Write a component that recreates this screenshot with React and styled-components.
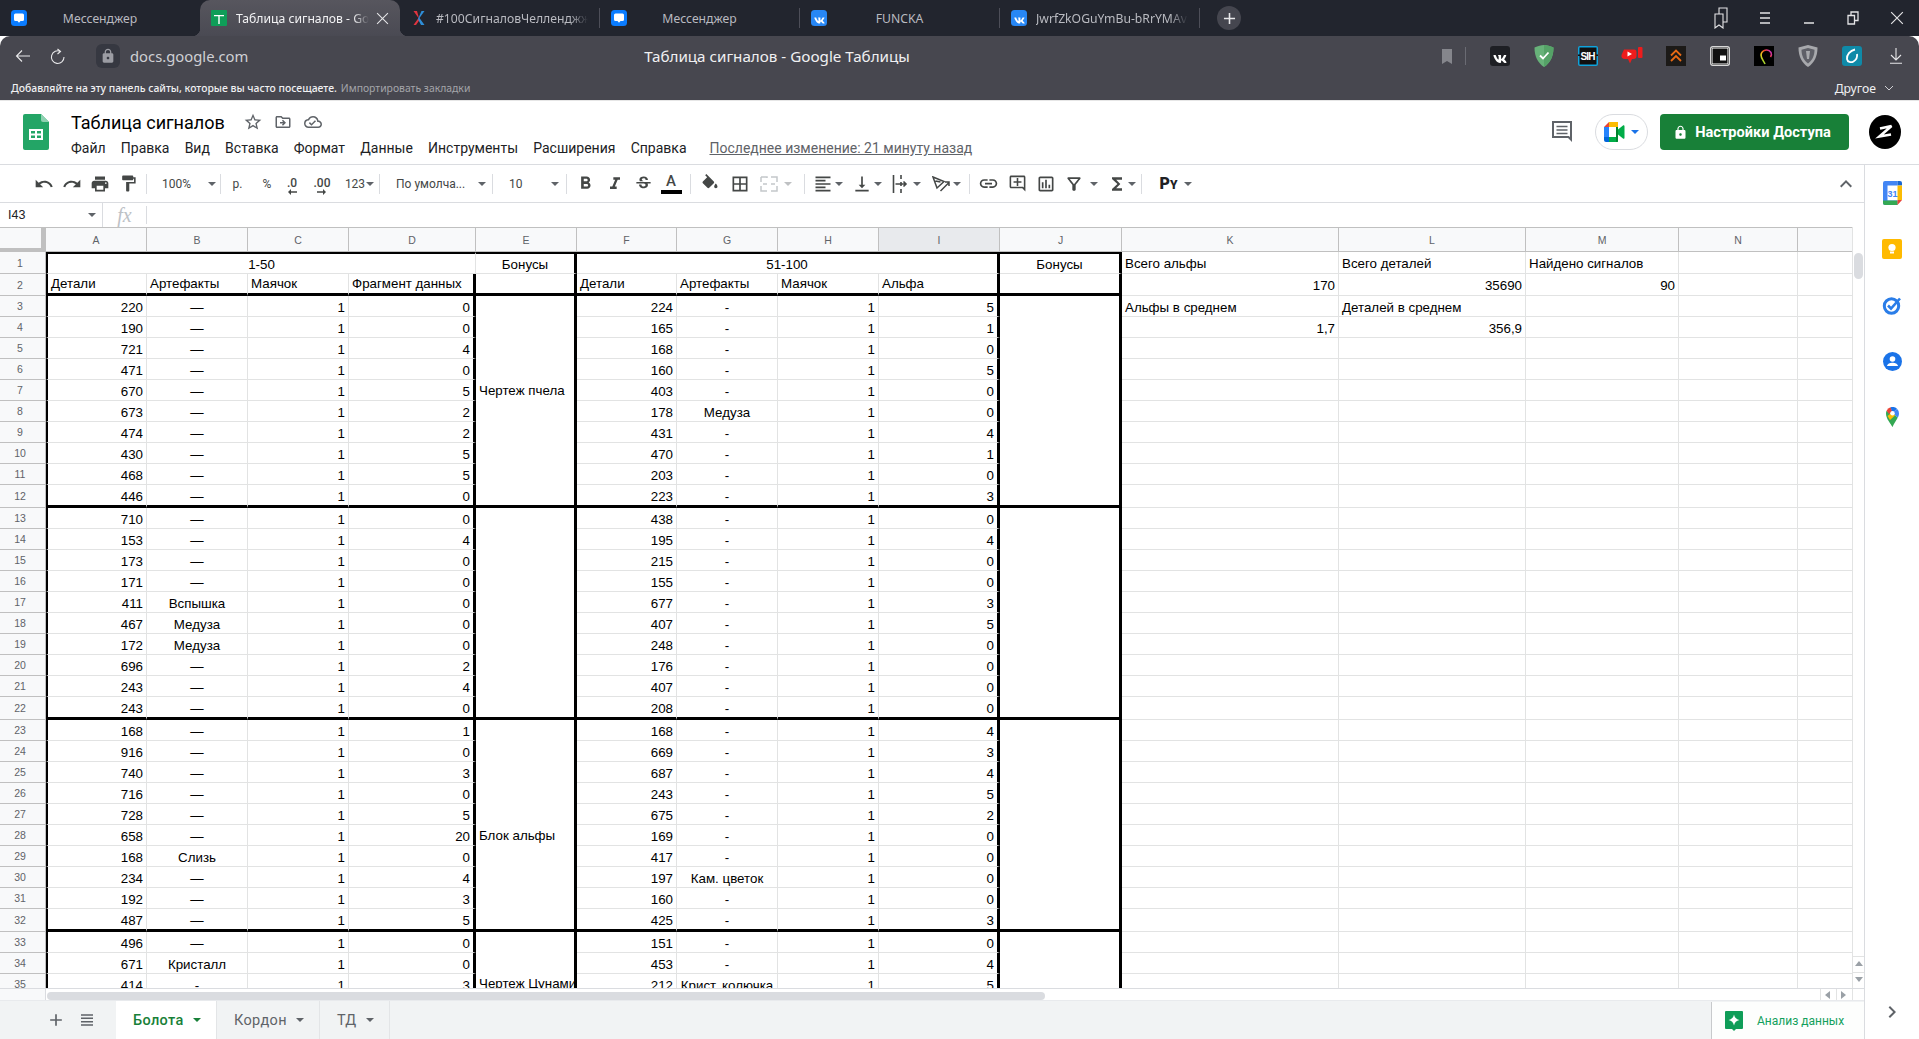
import React from "react";
import styled, { createGlobalStyle } from "styled-components";
import { FaVk } from "react-icons/fa";
import {
  MdUndo, MdRedo, MdPrint, MdFormatPaint, MdFormatBold, MdFormatItalic, MdStrikethroughS,
  MdBorderAll, MdFormatAlignLeft, MdVerticalAlignBottom, MdInsertLink,
  MdOutlineAddComment, MdOutlineInsertChart, MdOutlineFilterAlt, MdFunctions, MdStarBorder,
  MdOutlineDriveFileMove, MdOutlineCloudDone, MdLock, MdAdd, MdExpandLess, MdChevronRight,
} from "react-icons/md";

const UI_FONT = `"Noto Sans", "Open Sans", sans-serif`;
const DOC_FONT = `Roboto, "Liberation Sans", sans-serif`;
const CELL_FONT = `"Liberation Sans", Arial, sans-serif`;

const GlobalStyle = createGlobalStyle`
  html, body { margin: 0; padding: 0; background: #fff; overflow: hidden; }
  * { box-sizing: border-box; }
`;

const Page = styled.div`
  width: 1919px;
  height: 1039px;
  overflow: hidden;
  display: flex;
  flex-direction: column;
  background: #fff;
`;

/* browser chrome */
const TabStrip = styled.div`
  height: 36px;
  flex: none;
  display: flex;
  align-items: stretch;
  background: #22252e;
  font-family: ${UI_FONT};
`;

const Tab = styled.div`
  position: relative;
  width: ${p => (p.$w ? p.$w + "px" : "200px")};
  padding: 0 11px;
  display: flex;
  align-items: center;
  font-size: 12.2px;
  color: ${p => (p.$active ? "#f2f2f4" : "#b9bac0")};
  background: ${p => (p.$active ? "linear-gradient(#57565e, #4a4a53)" : "transparent")};
  border-radius: ${p => (p.$active ? "10px 10px 0 0" : "0")};
  ${p =>
    p.$active &&
    `
    &::before, &::after {
      content: "";
      position: absolute;
      bottom: 0;
      width: 8px;
      height: 8px;
    }
    &::before { left: -8px; background: radial-gradient(circle at 0 0, transparent 8px, #4a4a53 8.5px); }
    &::after { right: -8px; background: radial-gradient(circle at 100% 0, transparent 8px, #4a4a53 8.5px); }
  `}
`;

const TabTitle = styled.span`
  flex: 1;
  min-width: 0;
  overflow: hidden;
  white-space: nowrap;
  text-align: ${p => (p.$left ? "left" : "center")};
  margin: ${p => (p.$left ? "0 0 0 9px" : "0 16px 0 0")};
  mask-image: ${p => (p.$left ? "linear-gradient(90deg, #000 88%, transparent)" : "none")};
`;

const TabSep = styled.div`
  width: 1px;
  margin: 8px 0;
  background: #4d4e58;
`;

const TabClose = styled.span`
  width: 20px;
  flex: none;
  display: flex;
  justify-content: flex-end;
  color: #e6e6e8;
`;

const NewTab = styled.div`
  width: 24px;
  height: 24px;
  margin: 6px 0 0 17px;
  border-radius: 50%;
  background: #45464f;
  color: #e8e8ea;
  display: flex;
  align-items: center;
  justify-content: center;
`;

const WindowBtns = styled.div`
  margin-left: auto;
  display: flex;
`;

const WinBtn = styled.div`
  width: 44px;
  display: flex;
  align-items: center;
  justify-content: center;
  color: #e4e4e6;
`;

const AddressRow = styled.div`
  background: #47474f;
  border-radius: 10px 10px 0 0;
  height: 40px;
  flex: none;
  padding: 0 0 0 14px;
  display: flex;
  align-items: center;
  position: relative;
  z-index: 1;
  font-family: ${UI_FONT};
`;

const RoundIcon = styled.div`
  width: ${p => p.$w || 44}px;
  display: flex;
  justify-content: center;
  color: #e4e4e6;
`;

const LockBox = styled.div`
  width: 24px;
  height: 24px;
  margin-left: 12px;
  border-radius: 6px;
  background: #363841;
  display: flex;
  align-items: center;
  justify-content: center;
  color: #9b9ca3;
`;

const Url = styled.div`
  margin-left: 10px;
  width: 280px;
  font-size: 14.8px;
  color: #cfd0d4;
`;

const PageTitle = styled.div`
  width: 640px;
  margin-left: 47px;
  text-align: center;
  font-size: 15.2px;
  color: #f0f0f2;
  white-space: nowrap;
`;

const Extensions = styled.div`
  margin-left: auto;
  display: flex;
  align-items: center;
  padding-right: 1px;
`;

const ExtSep = styled.div`
  width: 1px;
  height: 18px;
  margin: 0 12px 0 13px;
  background: #6a6b73;
`;

const Ext = styled.div`
  width: 44px;
  display: flex;
  justify-content: center;
  align-items: center;
`;

const BookmarksRow = styled.div`
  height: 24px;
  flex: none;
  background: #47474f;
  padding: 0 11px;
  display: flex;
  align-items: center;
  font-family: ${UI_FONT};
  font-size: 10.4px;
  font-weight: 500;
  color: #f0f0f2;
`;

const Muted = styled.span`
  color: #a4a5aa;
  margin-left: 4px;
  font-weight: 400;
`;

const Other = styled.div`
  margin-left: auto;
  padding-right: 14px;
  display: flex;
  align-items: center;
  gap: 8px;
  font-size: 12.2px;
  font-weight: 400;
`;

/* docs header */
const DocHeader = styled.div`
  height: 65px;
  flex: none;
  border-top: 1px solid #e6e6e6;
  border-bottom: 1px solid #dadce0;
  padding: 13px 0 0 23px;
  display: flex;
  align-items: flex-start;
  font-family: ${DOC_FONT};
`;

const TitleBlock = styled.div`
  margin-left: 22px;
  margin-top: -4px;
`;

const TitleLine = styled.div`
  display: flex;
  align-items: center;
  height: 24px;
  color: #5f6368;
`;

const DocTitle = styled.div`
  width: 167px;
  font-size: 18px;
  color: #000;
`;

const TitleIcon = styled.div`
  width: 30px;
  display: flex;
  justify-content: center;
`;

const MenuBar = styled.div`
  display: flex;
  margin-top: 4px;
  font-size: 14px;
  color: #202124;
  height: 20px;
  align-items: center;
`;

const MenuItem = styled.div`
  margin-right: 15.2px;
`;

const LastEdit = styled.div`
  margin-left: 7.8px;
  color: #5f6368;
  text-decoration: underline;
`;

const HeaderRight = styled.div`
  margin-left: auto;
  display: flex;
  align-items: center;
  height: 36px;
`;

const MeetPill = styled.div`
  width: 53px;
  height: 36px;
  margin-left: 22px;
  border: 1px solid #dadce0;
  border-radius: 18px;
  display: flex;
  align-items: center;
  justify-content: center;
  gap: 2px;
`;

const ShareBtn = styled.div`
  width: 189px;
  height: 36px;
  margin-left: 12px;
  padding-right: 5px;
  border-radius: 4px;
  background: #188038;
  color: #fff;
  font-size: 14.6px;
  font-weight: 700;
  display: flex;
  align-items: center;
  justify-content: center;
  gap: 7px;
`;

const Avatar = styled.div`
  width: 32px;
  height: 34px;
  margin: 0 18px 0 20px;
  border-radius: 50%;
  background: #000;
  display: flex;
  align-items: center;
  justify-content: center;
`;

const Main = styled.div`
  flex: 1;
  display: flex;
  min-height: 0;
`;

const Content = styled.div`
  width: 1865px;
  display: flex;
  flex-direction: column;
  border-right: 1px solid #dadce0;
`;

const Side = styled.div`
  flex: 1;
  display: flex;
  flex-direction: column;
  align-items: center;
`;

const SideIcon = styled.div`
  height: 56px;
  display: flex;
  align-items: center;
  justify-content: center;
`;

const SideBottom = styled.div`
  margin-top: auto;
  height: 39px;
  color: #5f6368;
  display: flex;
  align-items: flex-start;
`;

/* toolbar */
const Toolbar = styled.div`
  height: 38px;
  flex: none;
  border-bottom: 1px solid #dadce0;
  padding-left: 30px;
  display: flex;
  align-items: center;
  color: #444746;
  font-family: ${DOC_FONT};
  font-size: 12px;
`;

const ToolBtn = styled.div`
  width: ${p => p.$w || 28}px;
  margin-left: ${p => p.$ml || 0}px;
  height: 24px;
  flex: none;
  display: flex;
  align-items: center;
  justify-content: ${p => (p.$start ? "flex-start" : "center")};
  padding-left: ${p => p.$pl || 0}px;
  gap: ${p => p.$gap || 0}px;
  color: ${p => (p.$off ? "#c4c7ca" : "#444746")};
  white-space: nowrap;
`;

const ToolSep = styled.div`
  width: 1px;
  height: 20px;
  flex: none;
  margin: 0 ${p => p.$r ?? 0}px 0 ${p => p.$l ?? 4}px;
  background: #dadce0;
`;

const Caret = styled.span`
  width: 0;
  height: 0;
  flex: none;
  margin-left: ${p => p.$ml || 0}px;
  border-left: 4px solid transparent;
  border-right: 4px solid transparent;
  border-top: 4px solid ${p => p.$color || "#5f6368"};
  opacity: ${p => (p.$off ? 0.4 : 1)};
`;

const Decimal = styled.div`
  display: flex;
  flex-direction: column;
  align-items: center;
  margin-top: 5px;
  font-weight: 500;
  line-height: 11px;
  font-size: 12px;
`;

const ColorA = styled.div`
  width: 21px;
  display: flex;
  flex-direction: column;
  align-items: center;
  font-size: 15px;
  font-weight: 500;
  line-height: 15px;
  &::after {
    content: "";
    width: 21px;
    height: 4px;
    margin-top: 1px;
    background: #000;
  }
`;

const PyMark = styled.div`
  font-size: 16px;
  font-weight: 900;
  color: #202124;
  & small { font-size: 12px; font-weight: 900; }
`;

const Collapse = styled.div`
  margin-left: auto;
  margin-right: 6px;
  color: #5f6368;
  display: flex;
`;

/* formula bar */
const FormulaBar = styled.div`
  height: 24px;
  flex: none;
  display: flex;
  align-items: center;
  font-family: ${CELL_FONT};
  font-size: 12.5px;
  color: #202124;
`;

const NameBox = styled.div`
  width: 103px;
  height: 100%;
  padding: 0 6px 0 8px;
  border-right: 1px solid #dadce0;
  display: flex;
  align-items: center;
  justify-content: space-between;
`;

const Fx = styled.div`
  width: 44px;
  height: 18px;
  border-right: 1px solid #dadce0;
  text-align: center;
  font-family: "Liberation Serif", serif;
  font-style: italic;
  font-size: 20px;
  line-height: 18px;
  color: #bdc1c6;
`;

/* sheet */
const SheetArea = styled.div`
  flex: 1;
  min-height: 0;
  display: flex;
  flex-direction: column;
  overflow: hidden;
`;

const SheetRow = styled.div`
  flex: 1;
  min-height: 0;
  display: flex;
  overflow: hidden;
`;

const GridClip = styled.div`
  width: 1853px;
  overflow: hidden;
`;

const SheetGrid = styled.div`
  display: grid;
  grid-template-columns: ${p => p.$cols};
  grid-template-rows: ${p => p.$rows};
  font-family: ${CELL_FONT};
  font-size: 13.33px;
  color: #000;
`;

const Corner = styled.div`
  background: #f8f9fa;
  border-top: 1px solid #c0c0c0;
  border-right: 5px solid #c0c0c0;
  border-bottom: 4px solid #c0c0c0;
`;

const ColHead = styled.div`
  background: ${p => (p.$sel ? "#e8eaed" : "#f8f9fa")};
  border-top: 1px solid #c0c0c0;
  border-right: 1px solid #c0c0c0;
  border-bottom: 1px solid #c0c0c0;
  color: #5f6368;
  font-size: 10.5px;
  display: flex;
  align-items: center;
  justify-content: center;
`;

const RowHead = styled.div`
  background: #f8f9fa;
  border-right: 1px solid #c0c0c0;
  border-bottom: 1px solid #c0c0c0;
  color: #5f6368;
  font-size: 10.5px;
  display: flex;
  align-items: center;
  justify-content: center;
  padding-right: 5px;
`;

const Cell = styled.div`
  grid-column: span ${p => p.$spanC || 1};
  grid-row: span ${p => p.$spanR || 1};
  min-width: 0;
  overflow: hidden;
  white-space: nowrap;
  display: flex;
  align-items: ${p => p.$valign || "center"};
  justify-content: ${p => (p.$align === "right" ? "flex-end" : p.$align === "center" ? "center" : "flex-start")};
  padding: ${p => p.$pt ?? 2}px 3px ${p => p.$pb || 0}px 3px;
  border-right: ${p => (p.$thickR ? "3px solid #000" : "1px solid #e2e3e3")};
  border-bottom: ${p => (p.$thickB ? "3px solid #000" : "1px solid #e2e3e3")};
  border-top: ${p => (p.$top ? "2px solid #000" : "0")};
  border-left: ${p => (p.$left ? "2px solid #000" : "0")};
`;

const VScroll = styled.div`
  width: 12px;
  flex: none;
  display: flex;
  flex-direction: column;
  border-left: 1px solid #e2e3e3;
  background: #fff;
`;

const VTrack = styled.div`
  flex: 1;
  padding-top: 1px;
`;

const VThumb = styled.div`
  width: 9px;
  height: 26px;
  margin: 25px 0 0 1px;
  border-radius: 5px;
  background: #dadce0;
`;

const ArrowBtn = styled.div`
  height: ${p => p.$h || 16}px;
  width: ${p => p.$w || "100%"};
  border-top: ${p => (p.$side ? "0" : "1px solid #e2e3e3")};
  border-left: ${p => (p.$side ? "1px solid #e2e3e3" : "0")};
  display: flex;
  align-items: center;
  justify-content: center;
`;

const HScroll = styled.div`
  height: 12px;
  flex: none;
  border-top: 1px solid #dadce0;
  display: flex;
`;

const HCorner = styled.div`
  width: 46px;
  border-right: 1px solid #dadce0;
  background: #f8f9fa;
`;

const HTrack = styled.div`
  flex: 1;
  padding: 3px 0 0 1px;
`;

const HThumb = styled.div`
  width: 998px;
  height: 8px;
  border-radius: 4px;
  background: #dadce0;
`;

const SheetTabs = styled.div`
  height: 39px;
  flex: none;
  background: #f1f3f4;
  border-top: 1px solid #e8eaed;
  display: flex;
  font-family: ${DOC_FONT};
  font-size: 14.5px;
`;

const TabsTools = styled.div`
  width: 116px;
  padding-left: 46px;
  display: flex;
  align-items: center;
  gap: 15px;
  color: #5f6368;
`;

const SheetTab = styled.div`
  width: ${p => p.$w}px;
  padding-left: 17px;
  display: flex;
  align-items: center;
  gap: 9px;
  border-right: 1px solid #e3e5e7;
  background: ${p => (p.$active ? "#fff" : "transparent")};
  color: ${p => (p.$active ? "#188038" : "#5f6368")};
  font-weight: ${p => (p.$active ? 500 : 400)};
  letter-spacing: 0.35px;
`;

const Insights = styled.div`
  margin-left: auto;
  width: 153px;
  margin-top: 1px;
  padding-left: 13px;
  background: #fdfefd;
  border-left: 1px solid #c8cacc;
  display: flex;
  align-items: center;
  gap: 14px;
  color: #12a05c;
  font-size: 12px;
`;

const W = [101, 101, 101, 127, 101, 100, 101, 101, 121, 122, 217, 187, 153, 119, 55];
const LETTERS = "ABCDEFGHIJKLMN".split("").concat("");

const D = [
  [220, "—", 1, 0, 224, "-", 1, 5], [190, "—", 1, 0, 165, "-", 1, 1], [721, "—", 1, 4, 168, "-", 1, 0],
  [471, "—", 1, 0, 160, "-", 1, 5], [670, "—", 1, 5, 403, "-", 1, 0], [673, "—", 1, 2, 178, "Медуза", 1, 0],
  [474, "—", 1, 2, 431, "-", 1, 4], [430, "—", 1, 5, 470, "-", 1, 1], [468, "—", 1, 5, 203, "-", 1, 0],
  [446, "—", 1, 0, 223, "-", 1, 3], [710, "—", 1, 0, 438, "-", 1, 0], [153, "—", 1, 4, 195, "-", 1, 4],
  [173, "—", 1, 0, 215, "-", 1, 0], [171, "—", 1, 0, 155, "-", 1, 0], [411, "Вспышка", 1, 0, 677, "-", 1, 3],
  [467, "Медуза", 1, 0, 407, "-", 1, 5], [172, "Медуза", 1, 0, 248, "-", 1, 0], [696, "—", 1, 2, 176, "-", 1, 0],
  [243, "—", 1, 4, 407, "-", 1, 0], [243, "—", 1, 0, 208, "-", 1, 0], [168, "—", 1, 1, 168, "-", 1, 4],
  [916, "—", 1, 0, 669, "-", 1, 3], [740, "—", 1, 3, 687, "-", 1, 4], [716, "—", 1, 0, 243, "-", 1, 5],
  [728, "—", 1, 5, 675, "-", 1, 2], [658, "—", 1, 20, 169, "-", 1, 0], [168, "Слизь", 1, 0, 417, "-", 1, 0],
  [234, "—", 1, 4, 197, "Кам. цветок", 1, 0], [192, "—", 1, 3, 160, "-", 1, 0], [487, "—", 1, 5, 425, "-", 1, 3],
  [496, "—", 1, 0, 151, "-", 1, 0], [671, "Кристалл", 1, 0, 453, "-", 1, 4], [414, "-", 1, 3, 212, "Крист. колючка", 1, 5],
];

const SIDE = {
  1: ["Всего альфы", "Всего деталей", "Найдено сигналов"],
  2: [170, 35690, 90],
  3: ["Альфы в среднем", "Деталей в среднем", ""],
  4: ["1,7", "356,9", ""],
};

const BONUS = {
  3: { span: 10, text: "Чертеж пчела", pb: 22 },
  13: { span: 10, text: "" },
  23: { span: 10, text: "Блок альфы", pt: 22 },
  33: { span: 3, text: "Чертеж Цунами", valign: "flex-end", pb: 3 },
};

const isGroupEnd = r => r === 12 || r === 22 || r === 32;

const rowTrack = r => (r <= 2 ? 22 : isGroupEnd(r) ? 23 : 21);

function SideCells({ row }) {
  const vals = SIDE[row] || ["", "", ""];
  const right = row === 2 || row === 4;
  return (
    <>
      {vals.map((v, i) => (
        <Cell key={i} $align={right ? "right" : "left"}>{v}</Cell>
      ))}
      <Cell />
      <Cell />
    </>
  );
}

function Sheet() {
  const rows = Array.from({ length: 35 }, (_, i) => i + 1);
  return (
    <SheetGrid
      $cols={"46px " + W.map(w => w + "px").join(" ")}
      $rows={"25px " + rows.map(r => rowTrack(r) + "px").join(" ")}
    >
      <Corner />
      {LETTERS.map((l, i) => (
        <ColHead key={i} $sel={l === "I"}>{l}</ColHead>
      ))}

      <RowHead>1</RowHead>
      <Cell $spanC={4} $align="center" $top $left $pt={1}>1-50</Cell>
      <Cell $align="center" $top $thickR $pt={1}>Бонусы</Cell>
      <Cell $spanC={4} $align="center" $top $thickR $pt={1}>51-100</Cell>
      <Cell $align="center" $top $thickR $pt={1}>Бонусы</Cell>
      <SideCells row={1} />

      <RowHead>2</RowHead>
      <Cell $thickB $left $pt={0}>Детали</Cell>
      <Cell $thickB $pt={0}>Артефакты</Cell>
      <Cell $thickB $pt={0}>Маячок</Cell>
      <Cell $thickB $thickR $pt={0}>Фрагмент данных</Cell>
      <Cell $thickB $thickR />
      <Cell $thickB $pt={0}>Детали</Cell>
      <Cell $thickB $pt={0}>Артефакты</Cell>
      <Cell $thickB $pt={0}>Маячок</Cell>
      <Cell $thickB $thickR $pt={0}>Альфа</Cell>
      <Cell $thickB $thickR />
      <SideCells row={2} />

      {D.map((d, idx) => {
        const r = idx + 3;
        const end = isGroupEnd(r);
        const bonus = BONUS[r];
        return (
          <React.Fragment key={r}>
            <RowHead>{r}</RowHead>
            <Cell $align="right" $thickB={end} $left>{d[0]}</Cell>
            <Cell $align="center" $thickB={end}>{d[1]}</Cell>
            <Cell $align="right" $thickB={end}>{d[2]}</Cell>
            <Cell $align="right" $thickB={end} $thickR>{d[3]}</Cell>
            {bonus && (
              <Cell $spanR={bonus.span} $thickR $thickB={bonus.span === 10} $pt={bonus.pt} $pb={bonus.pb} $valign={bonus.valign}>
                {bonus.text}
              </Cell>
            )}
            <Cell $align="right" $thickB={end}>{d[4]}</Cell>
            <Cell $align="center" $thickB={end}>{d[5]}</Cell>
            <Cell $align="right" $thickB={end}>{d[6]}</Cell>
            <Cell $align="right" $thickB={end} $thickR>{d[7]}</Cell>
            {bonus && <Cell $spanR={bonus.span} $thickR $thickB={bonus.span === 10} />}
            <SideCells row={r} />
          </React.Fragment>
        );
      })}
    </SheetGrid>
  );
}

/* drawings */
const MessengerIcon = () => (
  <svg width="16" height="16" viewBox="0 0 16 16">
    <rect width="16" height="16" rx="3.5" fill="#0a7cff" />
    <path d="M4.500 3.500h7A1.500 1.500 0 0 1 13 5v4.500a1.500 1.500 0 0 1-1.500 1.500H9.500L8 12.800 6.500 11H4.500A1.500 1.500 0 0 1 3 9.500V5a1.500 1.500 0 0 1 1.500-1.500z" fill="#fff" />
  </svg>
);

const SheetsTabIcon = () => (
  <svg width="16" height="16" viewBox="0 0 16 16">
    <rect width="16" height="16" rx="1" fill="#0f9d58" />
    <path d="M3 5h10v1.300H8.700V14H7.300V6.300H3z" fill="#fff" />
  </svg>
);

const CrossIcon = () => (
  <svg width="16" height="18" viewBox="0 0 16 18">
    <path d="M2.500 2l5 7-5 7h2.500l3.500-5L6 2z" fill="#e0343f" />
    <path d="M13.500 2l-5 7 5 7h-3.500L7 10l3.500-8z" fill="#2e8ed8" />
  </svg>
);

const VkTab = () => (
  <svg width="16" height="16" viewBox="0 0 16 16">
    <rect width="16" height="16" rx="3.500" fill="#2787f5" />
    <foreignObject x="2.500" y="2.500" width="11" height="11"><FaVk size={11} color="#fff" /></foreignObject>
  </svg>
);

const BackIcon = () => (
  <svg width="16" height="14" viewBox="0 0 16 14" fill="none" stroke="#e8e8ea" strokeWidth="1.100">
    <path d="M15 7H1.500M7 1.500 1.500 7 7 12.500" />
  </svg>
);

const ReloadIcon = () => (
  <svg width="16" height="17" viewBox="0 0 16 17" fill="none" stroke="#e8e8ea" strokeWidth="1.100">
    <path d="M10.500 3.500A6.300 6.300 0 1 0 14 9" />
    <path d="M7.500 1l3 2.500-3 2.500" />
  </svg>
);

const TabsIcon = () => (
  <svg width="14" height="22" viewBox="0 0 14 22" fill="none" stroke="#e4e4e6" strokeWidth="1.100">
    <path d="M1 21V7h8v14l-4-3z" />
    <path d="M5 7V1h8v14H9" />
  </svg>
);

const BurgerIcon = () => (
  <svg width="12" height="12" viewBox="0 0 12 12" stroke="#e4e4e6" strokeWidth="1.300"><path d="M1 1h10M1 6h10M1 11h10" /></svg>
);

const MinIcon = () => (
  <svg width="12" height="12" viewBox="0 0 12 12" stroke="#e4e4e6" strokeWidth="1.500"><path d="M1 11h10" /></svg>
);

const RestoreIcon = () => (
  <svg width="12" height="14" viewBox="0 0 12 14" fill="none" stroke="#e4e4e6" strokeWidth="1.300"><path d="M1 4.500h6.500V13H1zM4 4.500V1h7v8.500H7.500" /></svg>
);

const CloseIcon = ({ size = 12 }) => (
  <svg width={size} height={size} viewBox="0 0 12 12" stroke="#e4e4e6" strokeWidth="1"><path d="M1 1l10 10M11 1 1 11" /></svg>
);

const BookmarkGlyph = () => (
  <svg width="10" height="15" viewBox="0 0 10 15"><path d="M0 0h10v15l-5-3-5 3z" fill="#85868c" /></svg>
);

const VkExt = () => (
  <svg width="20" height="20" viewBox="0 0 20 20">
    <rect width="20" height="20" rx="3" fill="#1e1f24" />
    <foreignObject x="3" y="3" width="14" height="14"><FaVk size={14} color="#fff" /></foreignObject>
  </svg>
);

const GuardExt = () => (
  <svg width="20" height="22" viewBox="0 0 20 22">
    <path d="M10 0c3 0 6 1 9.500 2.500C19.500 12 16 18 10 22 4 18 .5 12 .5 2.500 4 1 7 0 10 0z" fill="#67b279" />
    <path d="M10 0c3 0 6 1 9.500 2.500C19.500 12 16 18 10 22z" fill="#55a267" />
    <path d="M6 10.500l3 3 5.500-6" fill="none" stroke="#fff" strokeWidth="1.800" />
  </svg>
);

const SihExt = () => (
  <svg width="20" height="20" viewBox="0 0 20 20">
    <rect width="20" height="20" rx="2" fill="#0fa3dc" />
    <rect x="1.500" y="1.500" width="17" height="17" fill="#111" />
    <rect x="0" y="8.500" width="20" height="1.500" fill="#111" />
    <text x="10" y="14" textAnchor="middle" fontFamily="Liberation Sans" fontSize="10" fontWeight="700" fill="#fff" textLength="15">SIH</text>
  </svg>
);

const YtExt = () => (
  <svg width="22" height="20" viewBox="0 0 22 20">
    <path d="M3 3.500h10c2 0 2.500 1 2.500 3V10c0 2-1 3-3 3H11l-2 4.500L7 13H4C1.500 13 0 11.500.5 9z" fill="#ee1c1c" />
    <path d="M6.500 5.500v5l4.500-2.500z" fill="#fff" />
    <rect x="17" y="1" width="4.500" height="11" rx="1" fill="#ee1c1c" />
  </svg>
);

const ChevExt = () => (
  <svg width="20" height="20" viewBox="0 0 20 20">
    <rect width="20" height="20" fill="#1c1a18" />
    <path d="M5 9.500l5-5 5 5M5 15l5-5 5 5" fill="none" stroke="#ea6a14" strokeWidth="1.800" />
  </svg>
);

const PipExt = () => (
  <svg width="20" height="20" viewBox="0 0 20 20">
    <rect x=".7" y=".7" width="18.600" height="18.600" rx="2" fill="#111" stroke="#d8d8d8" strokeWidth="1.400" />
    <rect x="3" y="3.500" width="14" height="13" fill="#111" />
    <rect x="2.200" y="2.200" width="15.600" height="15.600" fill="none" stroke="#fff" strokeWidth=".6" />
    <rect x="10" y="9.500" width="6" height="5" fill="#fff" />
  </svg>
);

const RainbowExt = () => (
  <svg width="20" height="20" viewBox="0 0 20 20">
    <defs>
      <linearGradient id="rb" x1="0" y1="1" x2="1" y2="0">
        <stop offset="0" stopColor="#3bd14c" />
        <stop offset=".35" stopColor="#f3d21c" />
        <stop offset=".65" stopColor="#f0462c" />
        <stop offset="1" stopColor="#c42be0" />
      </linearGradient>
    </defs>
    <rect width="20" height="20" fill="#000" />
    <path d="M11 18c-1-3-4-5-4-9a5.500 5.500 0 0 1 10-2.500c.5 1 .5 3-.5 4.500" fill="none" stroke="url(#rb)" strokeWidth="1.600" />
  </svg>
);

const ShieldExt = () => (
  <svg width="20" height="22" viewBox="0 0 20 22">
    <path d="M10 0l9.500 2.500C19.500 12 16 18 10 22 4 18 .5 12 .5 2.500z" fill="#a8a9ad" />
    <path d="M10 3l6.500 1.700C16.500 11 14 15.500 10 18.500 6 15.500 3.500 11 3.500 4.700z" fill="#5f6068" />
    <path d="M8 6h4l-1 8H9z" fill="#a8a9ad" />
  </svg>
);

const BlueExt = () => (
  <svg width="20" height="20" viewBox="0 0 20 20">
    <rect width="20" height="20" rx="3" fill="#0f8aa8" />
    <path d="M13 3.500C8 4.500 4.500 9 5 13c.5 3 4 4 6.500 2.500C14 14 15.500 11 15 8" fill="none" stroke="#fff" strokeWidth="1.800" />
  </svg>
);

const DownloadIcon = () => (
  <svg width="14" height="16" viewBox="0 0 14 16" fill="none" stroke="#e8e8ea" strokeWidth="1.100">
    <path d="M7 0v11.500M2 7l5 5 5-5M1 15.200h12" />
  </svg>
);

const ChevronDown = () => (
  <svg width="10" height="6" viewBox="0 0 10 6" fill="none" stroke="#d0d0d4" strokeWidth="1"><path d="M1 1l4 4 4-4" /></svg>
);

const SheetsLogo = () => (
  <svg width="26" height="36" viewBox="0 0 26 36">
    <path d="M2 0h16l8 8v26a2 2 0 0 1-2 2H2a2 2 0 0 1-2-2V2a2 2 0 0 1 2-2z" fill="#23a566" />
    <path d="M18 0l8 8h-6a2 2 0 0 1-2-2z" fill="#8ed1b1" />
    <path d="M6 15h14v11H6zM8 17v2.500h4V17zm6 0v2.500h4V17zm-6 4.500V24h4v-2.500zm6 0V24h4v-2.500z" fill="#fff" fillRule="evenodd" />
  </svg>
);

const ChatIcon = () => (
  <svg width="22" height="24" viewBox="0 0 22 24" fill="none" stroke="#5f6368" strokeWidth="2">
    <path d="M2 2h18v17.500L17.500 17H2z" />
    <path d="M5.500 6.500h11M5.500 10h11M5.500 13.500h11" strokeWidth="1.600" />
  </svg>
);

const MeetIcon = () => (
  <svg width="25" height="20" viewBox="0 0 25 20">
    <path d="M5 0h9v5H5z" fill="#fbbc04" />
    <path d="M5 0v5H0z" fill="#ea4335" />
    <path d="M0 5h5v10H0z" fill="#2684fc" />
    <path d="M0 15h5v5H2a2 2 0 0 1-2-2z" fill="#0066da" />
    <path d="M5 15h9v5H5z" fill="#00ac47" />
    <path d="M14 2v16a2 2 0 0 1-2 2v-5h2z" fill="#00832d" />
    <path d="M12 0a2 2 0 0 1 2 2v3h-2z" fill="#ffba00" />
    <path d="M14 7.500 19 3.500c1-.8 1.500 0 1.500 1v11c0 1-.5 1.800-1.500 1l-5-4z" fill="#00ac47" />
    <path d="M14 5v10H12V5z" fill="#00832d" />
    <rect x="5" y="5" width="7" height="10" fill="#fff" />
  </svg>
);

const ZMark = () => (
  <svg width="22" height="16" viewBox="0 0 22 16" fill="none" stroke="#fff" strokeWidth="2.600">
    <path d="M6 4.500 17.500 2 5.500 12.500 17 10.500" />
  </svg>
);

const CalendarIcon = () => (
  <svg width="19" height="24" viewBox="0 0 19 24">
    <rect width="19" height="24" rx="2" fill="#fff" />
    <path d="M2 0h12.500v4.500H4.500V19.500H14.500V24H2a2 2 0 0 1-2-2V2a2 2 0 0 1 2-2z" fill="#4285f4" />
    <path d="M14.500 0H17a2 2 0 0 1 2 2v2.500h-4.500z" fill="#1967d2" />
    <path d="M14.500 4.500H19v14.500h-4.500z" fill="#fbbc04" />
    <path d="M0 19.500h14.500V24H2a2 2 0 0 1-2-2z" fill="#34a853" />
    <path d="M14.500 19h4.500l-4.500 5z" fill="#ea4335" />
    <text x="9.500" y="15.500" textAnchor="middle" fontFamily="Liberation Sans" fontSize="9" fontWeight="700" fill="#4285f4">31</text>
  </svg>
);

const KeepIcon = () => (
  <svg width="20" height="20" viewBox="0 0 20 20">
    <rect width="20" height="20" rx="2" fill="#ffba00" />
    <circle cx="10" cy="8.500" r="3.600" fill="#fff" />
    <rect x="8" y="12.500" width="4" height="2" fill="#fff" />
  </svg>
);

const TasksIcon = () => (
  <svg width="20" height="20" viewBox="0 0 20 20" fill="none">
    <circle cx="9.500" cy="11" r="7.200" stroke="#2a7de8" strokeWidth="3" />
    <path d="M6 10.500l3 3 9-10" stroke="#2a7de8" strokeWidth="2.600" />
  </svg>
);

const ContactsIcon = () => (
  <svg width="19" height="19" viewBox="0 0 19 19">
    <circle cx="9.500" cy="9.500" r="9.500" fill="#1a73e8" />
    <circle cx="9.500" cy="7" r="2.800" fill="#fff" />
    <path d="M4 14c.5-2.500 3.500-3.200 5.500-3.200S14.500 11.500 15 14z" fill="#fff" />
  </svg>
);

const MapsIcon = () => (
  <svg width="13" height="20" viewBox="0 0 13 20">
    <path d="M6.500 20C4.500 16 0 12 0 6.500c0-1 .2-2 .6-2.800L6.500 8z" fill="#34a853" />
    <path d="M.6 3.700A6.500 6.500 0 0 1 4.500.3L6.500 4.200 3 7z" fill="#ea4335" />
    <path d="M4.500.3a6.500 6.500 0 0 1 6.500 1.500L6.500 6z" fill="#1a73e8" />
    <path d="M11 1.800A6.500 6.500 0 0 1 13 6.500c0 1.500-.5 3-1.300 4.300L6.500 6z" fill="#4285f4" />
    <path d="M1.500 9l5-3 5.200 4.800C10 14 8 16.500 6.500 20z" fill="#34a853" />
    <path d="M1.500 9 6.500 5 9 8.500 4 13z" fill="#fbbc04" />
    <circle cx="6.500" cy="6.300" r="2.200" fill="#fff" />
  </svg>
);

const SparkIcon = () => (
  <svg width="18" height="20" viewBox="0 0 18 20">
    <path d="M1 0h16a1 1 0 0 1 1 1v16a1 1 0 0 1-1 1h-6l-2 2-2-2H1a1 1 0 0 1-1-1V1a1 1 0 0 1 1-1z" fill="#0f9d58" />
    <path d="M9 3.500c.6 3 2.400 4.900 5.500 5.500-3.100.6-4.900 2.500-5.500 5.500C8.400 11.500 6.600 9.600 3.500 9 6.600 8.400 8.400 6.500 9 3.500z" fill="#fff" />
  </svg>
);

const BucketIcon = () => (
  <svg width="20" height="20" viewBox="0 0 24 24" fill="#444746">
    <path d="M16.560 8.940 7.620 0 6.210 1.410l2.380 2.380-5.150 5.150c-.59.590-.59 1.540 0 2.120l5.500 5.500c.29.290.68.440 1.060.440s.77-.150 1.060-.440l5.500-5.500c.59-.580.59-1.530 0-2.120zM19 11.500s-2 2.170-2 3.500c0 1.100.9 2 2 2s2-.9 2-2c0-1.330-2-3.500-2-3.500z" />
  </svg>
);

const ListIcon = () => (
  <svg width="12" height="12" viewBox="0 0 12 12" stroke="#5f6368" strokeWidth="1.500">
    <path d="M0 1h12M0 4.300h12M0 7.700h12M0 11h12" />
  </svg>
);

const MergeIcon = () => (
  <svg width="18" height="16" viewBox="0 0 18 16" fill="none" stroke="#c4c7ca" strokeWidth="1.500">
    <path d="M1 1h6v1M11 1h6v5M1 10v5h6M17 10v5h-6M1 1v5" />
    <path d="M3 8h4M15 8h-4" />
  </svg>
);

const WrapIcon = () => (
  <svg width="16" height="18" viewBox="0 0 16 18" fill="none" stroke="#444746" strokeWidth="1.600">
    <path d="M1.500 0v18M9 0v4M9 14v4M9 7v4" />
    <path d="M3.500 9H14M11.500 6.500 14 9l-2.500 2.500" />
  </svg>
);

const RotateIcon = () => (
  <svg width="18" height="16" viewBox="0 0 18 16" fill="none" stroke="#444746" strokeWidth="1.500">
    <path d="M1 1l11 4.500L5 12zM3.500 5l5 1" />
    <path d="M8.500 15 17 6.500M13 6h4v4" />
  </svg>
);

const TinyArrow = ({ dir }) => (
  <svg width="9" height="6" viewBox="0 0 9 6" fill="#444746">
    {dir === "left" ? <path d="M9 2.300H3V0L0 3l3 3V3.700h6z" /> : <path d="M0 2.300h6V0l3 3-3 3V3.700H0z" />}
  </svg>
);

const ScrollTri = ({ dir }) => {
  const d = { up: "M0 5l4-5 4 5z", down: "M0 0l4 5 4-5z", left: "M5 0v8L0 4z", right: "M0 0v8l5-4z" }[dir];
  return <svg width="8" height="8" viewBox="0 0 8 8" fill="#9aa0a6"><path d={d} /></svg>;
};

const TITLES = [
  { icon: <MessengerIcon />, title: "Мессенджер" },
  { icon: <SheetsTabIcon />, title: "Таблица сигналов - Google Таблицы", active: true, left: true },
  { icon: <CrossIcon />, title: "#100СигналовЧелленджж - Twitter", left: true, sep: true },
  { icon: <MessengerIcon />, title: "Мессенджер", sep: true },
  { icon: <VkTab />, title: "FUNCKA", sep: true },
  { icon: <VkTab />, title: "JwrfZkOGuYmBu-bRrYMAvZxc", left: true, sep: true },
];

const MENU = ["Файл", "Правка", "Вид", "Вставка", "Формат", "Данные", "Инструменты", "Расширения", "Справка"];

function App() {
  return (
    <Page>
      <GlobalStyle />
      <TabStrip>
        {TITLES.map((t, i) => (
          <React.Fragment key={i}>
            <Tab $active={t.active} $w={t.sep ? 199 : 200}>
              {t.icon}
              <TabTitle $left={t.left}>{t.title}</TabTitle>
              {t.active && <TabClose><CloseIcon size={13} /></TabClose>}
            </Tab>
            {t.sep && <TabSep />}
          </React.Fragment>
        ))}
        <NewTab><MdAdd size={19} /></NewTab>
        <WindowBtns>
          <WinBtn><TabsIcon /></WinBtn>
          <WinBtn><BurgerIcon /></WinBtn>
          <WinBtn><MinIcon /></WinBtn>
          <WinBtn><RestoreIcon /></WinBtn>
          <WinBtn><CloseIcon size={14} /></WinBtn>
        </WindowBtns>
      </TabStrip>

      <AddressRow>
        <RoundIcon $w={18}><BackIcon /></RoundIcon>
        <RoundIcon $w={52}><ReloadIcon /></RoundIcon>
        <LockBox><MdLock size={16} /></LockBox>
        <Url>docs.google.com</Url>
        <PageTitle>Таблица сигналов - Google Таблицы</PageTitle>
        <Extensions>
          <BookmarkGlyph />
          <ExtSep />
          <Ext><VkExt /></Ext>
          <Ext><GuardExt /></Ext>
          <Ext><SihExt /></Ext>
          <Ext><YtExt /></Ext>
          <Ext><ChevExt /></Ext>
          <Ext><PipExt /></Ext>
          <Ext><RainbowExt /></Ext>
          <Ext><ShieldExt /></Ext>
          <Ext><BlueExt /></Ext>
          <Ext><DownloadIcon /></Ext>
        </Extensions>
      </AddressRow>

      <BookmarksRow>
        Добавляйте на эту панель сайты, которые вы часто посещаете.
        <Muted>Импортировать закладки</Muted>
        <Other>Другое <ChevronDown /></Other>
      </BookmarksRow>

      <DocHeader>
        <SheetsLogo />
        <TitleBlock>
          <TitleLine>
            <DocTitle>Таблица сигналов</DocTitle>
            <TitleIcon><MdStarBorder size={20} /></TitleIcon>
            <TitleIcon><MdOutlineDriveFileMove size={18} /></TitleIcon>
            <TitleIcon><MdOutlineCloudDone size={18} /></TitleIcon>
          </TitleLine>
          <MenuBar>
            {MENU.map(m => <MenuItem key={m}>{m}</MenuItem>)}
            <LastEdit>Последнее изменение: 21 минуту назад</LastEdit>
          </MenuBar>
        </TitleBlock>
        <HeaderRight>
          <ChatIcon />
          <MeetPill><MeetIcon /><Caret $color="#1a73e8" /></MeetPill>
          <ShareBtn><MdLock size={15} /> Настройки Доступа</ShareBtn>
          <Avatar><ZMark /></Avatar>
        </HeaderRight>
      </DocHeader>

      <Main>
        <Content>
          <Toolbar>
            <ToolBtn><MdUndo size={20} /></ToolBtn>
            <ToolBtn><MdRedo size={20} /></ToolBtn>
            <ToolBtn><MdPrint size={20} /></ToolBtn>
            <ToolBtn><MdFormatPaint size={19} /></ToolBtn>
            <ToolSep />
            <ToolBtn $w={73} $start $pl={15} $gap={17}>100% <Caret /></ToolBtn>
            <ToolSep $l={0} />
            <ToolBtn $w={33}>р.</ToolBtn>
            <ToolBtn $w={26}>%</ToolBtn>
            <ToolBtn $w={24}><Decimal>.0<TinyArrow dir="left" /></Decimal></ToolBtn>
            <ToolBtn $w={36}><Decimal>.00<TinyArrow dir="right" /></Decimal></ToolBtn>
            <ToolBtn $w={39} $gap={1}>123<Caret /></ToolBtn>
            <ToolSep $l={0} />
            <ToolBtn $w={112} $start $pl={16} $gap={13}>По умолча... <Caret /></ToolBtn>
            <ToolSep $l={0} />
            <ToolBtn $w={73} $start $pl={16} $gap={28}>10 <Caret /></ToolBtn>
            <ToolSep $l={0} $r={4} />
            <ToolBtn $w={29}><MdFormatBold size={21} /></ToolBtn>
            <ToolBtn $w={29}><MdFormatItalic size={20} /></ToolBtn>
            <ToolBtn $w={28}><MdStrikethroughS size={19} /></ToolBtn>
            <ToolBtn><ColorA>A</ColorA></ToolBtn>
            <ToolSep $l={5} />
            <ToolBtn $ml={5}><BucketIcon /></ToolBtn>
            <ToolBtn $ml={2}><MdBorderAll size={20} /></ToolBtn>
            <ToolBtn $w={44} $gap={6} $off><MergeIcon /><Caret $off /></ToolBtn>
            <ToolSep $l={6} />
            <ToolBtn $w={38} $gap={2} $ml={4}><MdFormatAlignLeft size={20} /><Caret /></ToolBtn>
            <ToolBtn $w={39} $gap={2}><MdVerticalAlignBottom size={20} /><Caret /></ToolBtn>
            <ToolBtn $w={40} $gap={5}><WrapIcon /><Caret /></ToolBtn>
            <ToolBtn $w={40} $gap={3}><RotateIcon /><Caret /></ToolBtn>
            <ToolSep $l={3} />
            <ToolBtn $ml={4}><MdInsertLink size={21} /></ToolBtn>
            <ToolBtn $ml={1}><MdOutlineAddComment size={19} /></ToolBtn>
            <ToolBtn $ml={1}><MdOutlineInsertChart size={20} /></ToolBtn>
            <ToolBtn $w={40} $gap={6} $ml={1}><MdOutlineFilterAlt size={20} /><Caret /></ToolBtn>
            <ToolBtn $w={40} $gap={1}><MdFunctions size={20} /><Caret /></ToolBtn>
            <ToolSep $l={0} />
            <ToolBtn $w={52} $gap={7} $ml={8}><PyMark>P<small>Y</small></PyMark><Caret /></ToolBtn>
            <Collapse><MdExpandLess size={24} /></Collapse>
          </Toolbar>

          <FormulaBar>
            <NameBox>I43 <Caret /></NameBox>
            <Fx>fx</Fx>
          </FormulaBar>

          <SheetArea>
            <SheetRow>
              <GridClip><Sheet /></GridClip>
              <VScroll>
                <VTrack><VThumb /></VTrack>
                <ArrowBtn><ScrollTri dir="up" /></ArrowBtn>
                <ArrowBtn><ScrollTri dir="down" /></ArrowBtn>
              </VScroll>
            </SheetRow>
            <HScroll>
              <HCorner />
              <HTrack><HThumb /></HTrack>
              <ArrowBtn $w="16px" $side $h={12}><ScrollTri dir="left" /></ArrowBtn>
              <ArrowBtn $w="16px" $side $h={12}><ScrollTri dir="right" /></ArrowBtn>
              <ArrowBtn $w="12px" $side $h={12} />
            </HScroll>
          </SheetArea>

          <SheetTabs>
            <TabsTools><MdAdd size={20} /><ListIcon /></TabsTools>
            <SheetTab $w={101} $active>Болота <Caret $color="#188038" /></SheetTab>
            <SheetTab $w={103}>Кордон <Caret /></SheetTab>
            <SheetTab $w={70}>ТД <Caret /></SheetTab>
            <Insights><SparkIcon /> Анализ данных</Insights>
          </SheetTabs>
        </Content>

        <Side>
          <SideIcon><CalendarIcon /></SideIcon>
          <SideIcon><KeepIcon /></SideIcon>
          <SideIcon><TasksIcon /></SideIcon>
          <SideIcon><ContactsIcon /></SideIcon>
          <SideIcon><MapsIcon /></SideIcon>
          <SideBottom><MdChevronRight size={24} /></SideBottom>
        </Side>
      </Main>
    </Page>
  );
}

export default App;
